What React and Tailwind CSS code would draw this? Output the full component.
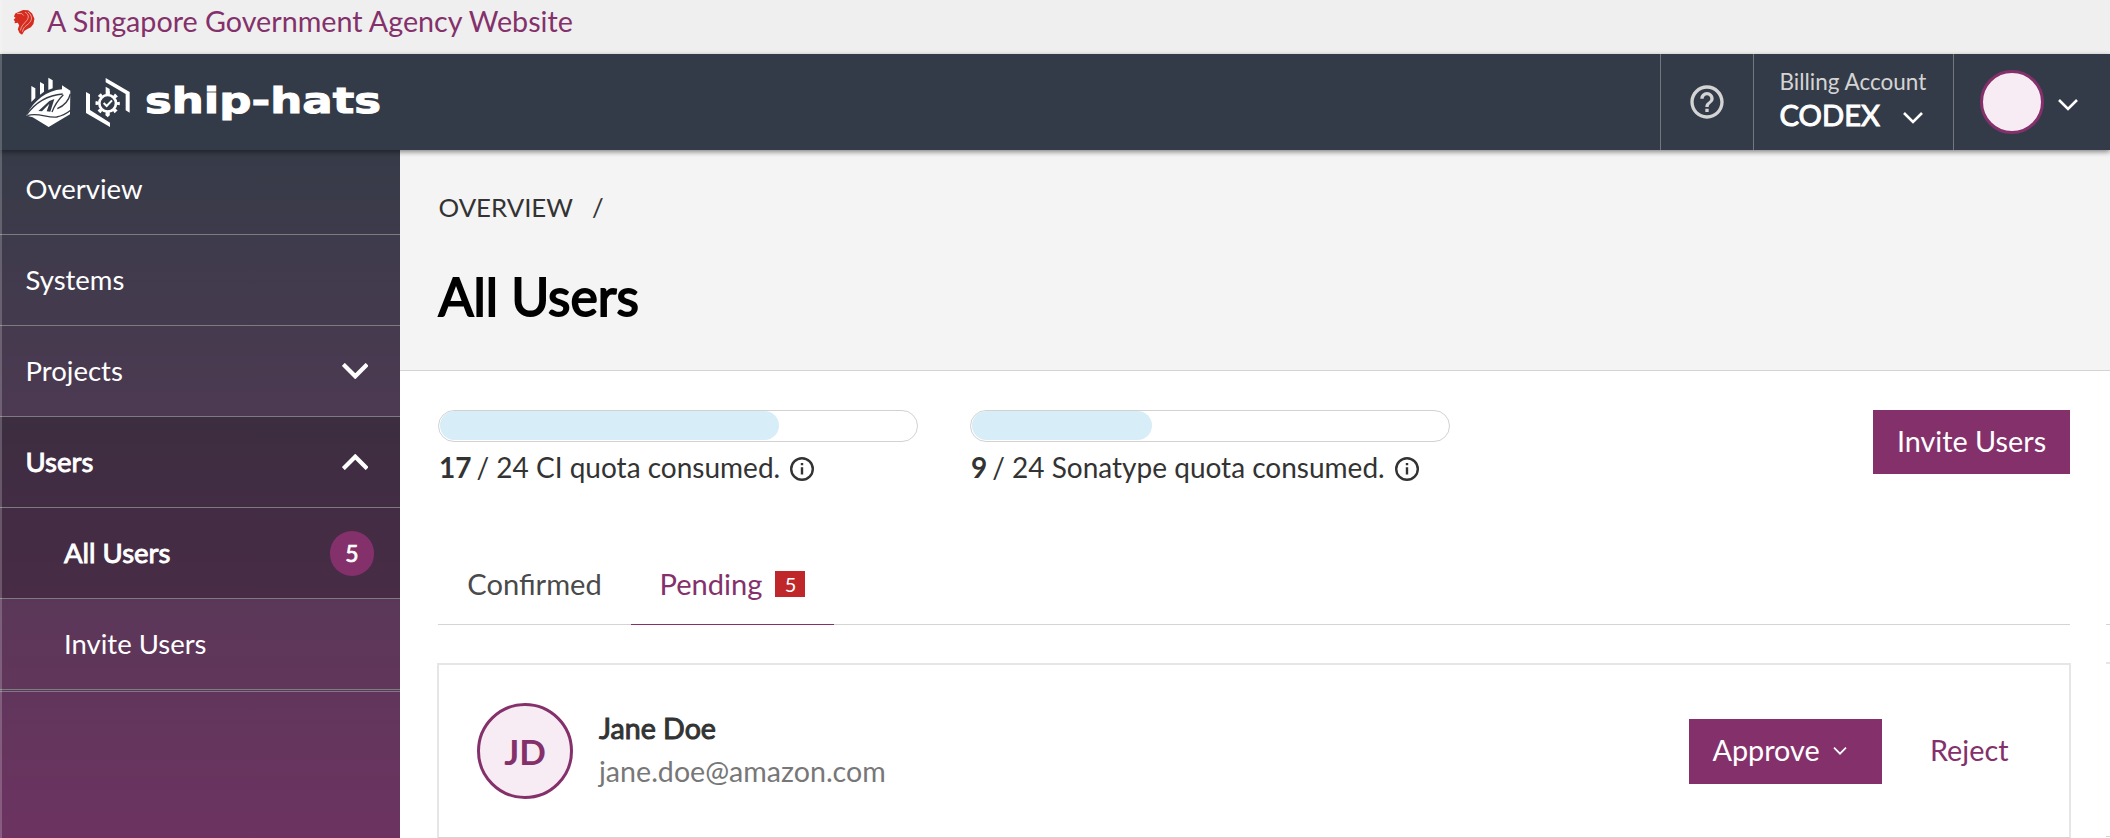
const navItems = [
  { label: "Overview", first: true },
  { label: "Systems" },
  { label: "Projects", chevron: "down" },
  { label: "Users", chevron: "up", active: true },
  { label: "All Users", child: true, active: true, badge: 5 },
  { label: "Invite Users", child: true },
];

function Chevron({ className, width, up = false }) {
  return (
    <svg viewBox="0 0 20 12" className={className} fill="none" stroke="currentColor" strokeWidth={width}>
      <path d={up ? "M1 11 10 2l9 9" : "M1 1l9 9 9-9"} />
    </svg>
  );
}

function LionMark() {
  return (
    <svg viewBox="0 0 66 80" className="h-[26px] w-[22px] shrink-0">
      <path
        fill="#d62b1f"
        d="M6 14 16 9 30 3 46 4 58 14 65 30 62 46 54 56 42 62 34 68 27 79 19 74 14 62 18 50 14 42 4 44 5 38 1 33 7 27 2 23z"
      />
      <path
        fill="none"
        stroke="#f3cfca"
        strokeWidth="2.2"
        d="M12 14h14l6 6M36 10c12 6 13 16 5 26S24 52 22 66M45 9c15 12 14 26 1 37S32 56 28 70"
      />
    </svg>
  );
}

function ShipMarks() {
  return (
    <svg viewBox="0 0 360 192" className="h-16 w-[120px] shrink-0" fill="#fff">
      <path d="M34 48l12 7v29L34 96zM60 36l12 7v22l-12 9zM85 23l13 8v24l-13 5z" />
      <path d="M20 134C42 92 80 61 126 58V46l25 16-1 71-64 38-48-29-18-5z" />
      <g fill="none" stroke="#343b48" strokeWidth="4">
        <path d="M20 134C46 98 80 76 128 72M22 137c30-12 60 8 88 4 16-3 28-9 42-20" />
        <path d="M112 116c24-10 34-24 39-44M96 126c8-22 22-40 34-52" />
      </g>
      <path fill="#343b48" d="M55 123 88 93 103 87 91 125 80 124 88 101 66 124z" />
      <path d="M198 66l12 7v47l60 38v13l-72-42zM257 24l72 42v62l-12-7V72l-60-35z" />
      <path d="M257 50l12 7v20h-12zM257 124h12v12l-6 6-6-6z" />
      <circle cx="263" cy="100" r="25" fill="none" stroke="#fff" strokeWidth="8" />
      <circle
        cx="263"
        cy="100"
        r="32"
        fill="none"
        stroke="#fff"
        strokeWidth="9"
        strokeDasharray="11 14.13"
        strokeDashoffset="5.5"
      />
      <path fill="none" stroke="#fff" strokeWidth="6" d="M251 99l9 9 16-17" />
    </svg>
  );
}

function InfoIcon() {
  return (
    <svg viewBox="0 0 24 24" className="mt-[3px] ml-[10px] h-6 w-6 shrink-0" fill="none" stroke="#333" strokeWidth="2.4">
      <circle cx="12" cy="12" r="10.8" />
      <path d="M12 10.3v7.2M12 6v2.3" />
    </svg>
  );
}

function Quota({ used, total, name }) {
  return (
    <div className="w-[480px]">
      <div className="h-8 rounded-full border border-[#d2d2d2] pb-px pl-px">
        <div className="h-full rounded-full bg-[#d7edf7]" style={{ width: `${(used / total) * 100.4}%` }} />
      </div>
      <div className="flex h-[50px] items-center pl-px text-[28px] text-[#333]">
        <p>
          <b className="mr-[5px]">{used}</b>
          <span>
            / {total} {name} quota consumed.
          </span>
        </p>
        <InfoIcon />
      </div>
    </div>
  );
}

function NavItem({ label, first, chevron, active, child, badge }) {
  return (
    <li
      className={`flex items-center justify-between border-b border-[#7c7c80] pr-[26px] text-[27.5px] ${first ? "h-[85px] pb-[7px]" : "h-[91px]"} ${child ? "pl-16" : "pl-[25.5px]"} ${active ? "bg-black/20 [-webkit-text-stroke:0.9px_white]" : ""}`}
    >
      <span>{label}</span>
      {chevron && <Chevron up={chevron === "up"} width={3.2} className="mr-1.5 h-4 w-[26.5px]" />}
      {badge && (
        <span className="flex h-[45px] w-11 items-center justify-center rounded-full bg-[#84316b] text-[23px] [-webkit-text-stroke:0.7px_white]">
          {badge}
        </span>
      )}
    </li>
  );
}

export default function App() {
  return (
    <div className="relative flex h-[838px] w-[2110px] flex-col overflow-hidden bg-white font-['Lato',sans-serif] text-[#333]">
      <div className="flex h-[54px] shrink-0 items-start bg-[#efefef] pl-[13px] pt-[9px]">
        <LionMark />
        <span className="ml-3 -mt-[5px] text-[28.7px] leading-[34px] text-[#84316b]">
          A Singapore Government Agency Website
        </span>
      </div>

      <header className="z-10 flex h-24 shrink-0 bg-[#343b48] text-white shadow-[0_2px_5px_rgba(0,0,0,0.45)]">
        <div className="flex flex-1 items-center pl-5">
          <ShipMarks />
          <svg viewBox="0 0 240 50" className="ml-[5px] h-[50px] w-60">
            <text
              x="0"
              y="36"
              textLength="236"
              lengthAdjust="spacingAndGlyphs"
              className="fill-white stroke-white stroke-[1px] font-['DejaVu_Sans',sans-serif] text-[35.5px] font-bold"
            >
              ship-hats
            </text>
          </svg>
        </div>
        <div className="flex w-[93px] items-center justify-center border-l border-[#74777d]">
          <svg viewBox="0 0 24 24" className="h-10 w-10" fill="#d4d4d4">
            <path d="M11 18h2v-2h-2v2zm1-16C6.480 2 2 6.480 2 12s4.480 10 10 10 10-4.480 10-10S17.520 2 12 2zm0 18c-4.410 0-8-3.590-8-8s3.590-8 8-8 8 3.590 8 8-3.590 8-8 8zm0-14c-2.210 0-4 1.790-4 4h2c0-1.100.9-2 2-2s2 .9 2 2c0 2-3 1.750-3 5h2c0-2.250 3-2.500 3-5 0-2.210-1.790-4-4-4z" />
          </svg>
        </div>
        <div className="w-[200px] border-l border-[#74777d] pt-3.5 pl-[25.5px]">
          <div className="text-[22.5px] leading-[27px] text-[#d4d4d4]">Billing Account</div>
          <div className="-mt-px flex items-center">
            <span className="text-[29.2px] leading-[42px] [-webkit-text-stroke:1px_white]">CODEX</span>
            <Chevron width={2.6} className="mt-1.5 ml-[23.500px] h-3 w-5" />
          </div>
        </div>
        <div className="flex w-[157px] items-center border-l border-[#74777d] pl-[26px]">
          <span className="h-16 w-16 rounded-full border-3 border-[#84316b] bg-[#f7ebf4]" />
          <Chevron width={2.6} className="mt-1.5 ml-3.5 h-3 w-5" />
        </div>
      </header>

      <div className="flex min-h-0 flex-1">
        <nav className="w-[400px] shrink-0 bg-linear-to-b from-[#363b48] to-[#6c3361] text-white">
          <ul className="border-b border-[#7c7c80] pb-px">
            {navItems.map((item) => (
              <NavItem key={item.label} {...item} />
            ))}
          </ul>
        </nav>

        <main className="flex flex-1 flex-col">
          <div className="h-[221px] shrink-0 border-b border-[#d4d4d4] bg-[#f4f4f4] pt-[39px] pl-[38.5px]">
            <div className="flex gap-[19px] text-[25.8px] leading-9">
              <span>OVERVIEW</span>
              <span>/</span>
            </div>
            <h1 className="mt-10 text-[51.8px] leading-[62px] text-black [-webkit-text-stroke:1.8px_black]">All Users</h1>
          </div>

          <div className="flex flex-1">
            <section className="w-[1672px] pt-[39px] pl-[38px] pr-0.5">
              <div className="flex h-[137px] items-start gap-[52px]">
                <Quota used={17} total={24} name="CI" />
                <Quota used={9} total={24} name="Sonatype" />
                <button className="ml-auto h-16 w-[197px] bg-[#84316b] text-[28.8px] text-white">Invite Users</button>
              </div>

              <div className="flex h-[78px] border-b border-[#d4d4d4] text-[29.1px] text-[#4a4a4a]">
                <div className="flex h-[78px] w-[193px] items-center justify-center pb-[5px]">Confirmed</div>
                <div className="flex h-[78px] w-[203px] items-center justify-center border-b border-[#84316b] pb-1 text-[#84316b]">
                  Pending
                  <span className="ml-[13px] flex h-[26px] w-[30px] items-center justify-center bg-[#c0272a] text-[20px] text-white">
                    5
                  </span>
                </div>
              </div>

              <div className="-mx-px mt-[38px] h-[175px] w-[1634px] border-2 border-b border-[#e6e6e6] border-b-[#d4d4d4]">
                <div className="flex items-center pt-[38px] pl-[38px]">
                  <span className="flex h-24 w-24 items-center justify-center rounded-full border-3 border-[#84316b] bg-[#f7ebf4] text-[35px] font-bold text-[#84316b]">
                    JD
                  </span>
                  <div className="-mt-0.5 ml-[26px] text-[28.6px] leading-[43px]">
                    <div className="[-webkit-text-stroke:1px_#333]">Jane Doe</div>
                    <div className="text-[#777]">jane.doe@amazon.com</div>
                  </div>
                  <button className="ml-auto flex h-[65px] w-[193px] items-center bg-[#84316b] pl-6 text-[28.8px] text-white">
                    Approve
                    <Chevron width={2.6} className="ml-[13px] h-2 w-3.5" />
                  </button>
                  <button className="mr-[60.5px] ml-[48.5px] text-[28.8px] text-[#84316b]">Reject</button>
                </div>
              </div>
            </section>

            <aside className="ml-auto flex w-1 flex-col pt-[253px]">
              <div className="border-t border-[#d4d4d4]" />
              <div className="mt-[37px] h-[175px] border-t-2 border-b border-[#e6e6e6] border-b-[#d4d4d4]" />
            </aside>
          </div>
        </main>
      </div>

      <div className="pointer-events-none absolute inset-y-0 left-0 z-20 w-0.5 bg-white/20" />
    </div>
  );
}
